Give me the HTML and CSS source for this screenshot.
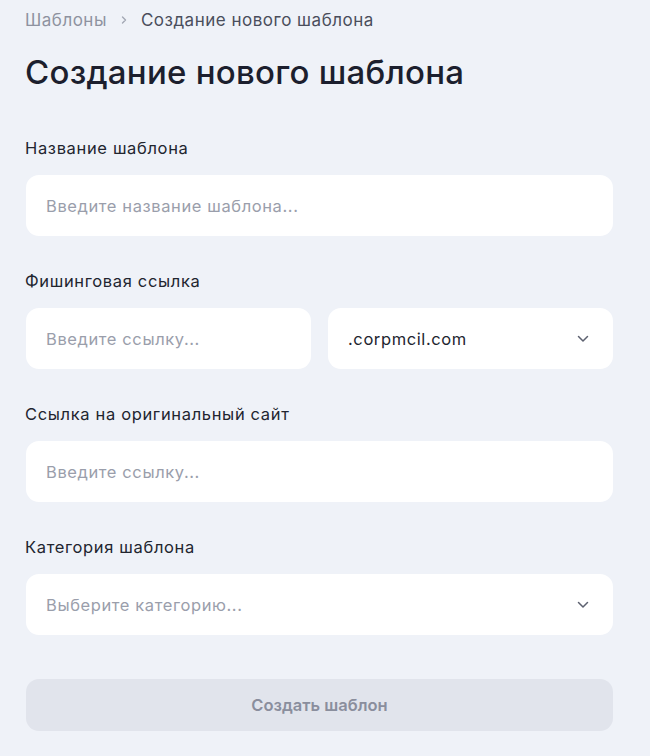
FILE: index.html
```html
<!DOCTYPE html>
<html lang="ru">
<head>
<meta charset="utf-8">
<title>Создание нового шаблона</title>
<link rel="stylesheet" href="styles.css">
</head>
<body>
<div class="page">
  <nav class="crumbs">
    <span class="crumb-link">Шаблоны</span>
    <svg class="crumb-sep" width="8" height="10" viewBox="0 0 8 10"><path d="M2.5 2 L5.5 5 L2.5 8" fill="none" stroke="#a3a7b4" stroke-width="1.4" stroke-linecap="round" stroke-linejoin="round"/></svg>
    <span class="crumb-current">Создание нового шаблона</span>
  </nav>
  <h1 class="title">Создание нового шаблона</h1>

  <form class="form">
    <div class="group">
      <div class="label">Название шаблона</div>
      <div class="field"><span class="placeholder">Введите название шаблона...</span></div>
    </div>
    <div class="group">
      <div class="label">Фишинговая ссылка</div>
      <div class="row">
        <div class="field"><span class="placeholder">Введите ссылку...</span></div>
        <div class="field select"><span class="value">.corpmcil.com</span>
          <svg class="chev" width="12" height="8" viewBox="0 0 12 8"><path d="M1.5 1.5 L6 6 L10.5 1.5" fill="none" stroke="#5d6170" stroke-width="1.5" stroke-linecap="round" stroke-linejoin="round"/></svg>
        </div>
      </div>
    </div>
    <div class="group">
      <div class="label">Ссылка на оригинальный сайт</div>
      <div class="field"><span class="placeholder">Введите ссылку...</span></div>
    </div>
    <div class="group">
      <div class="label">Категория шаблона</div>
      <div class="field select"><span class="placeholder">Выберите категорию...</span>
        <svg class="chev" width="12" height="8" viewBox="0 0 12 8"><path d="M1.5 1.5 L6 6 L10.5 1.5" fill="none" stroke="#5d6170" stroke-width="1.5" stroke-linecap="round" stroke-linejoin="round"/></svg>
      </div>
    </div>
    <div class="button">Создать шаблон</div>
  </form>
</div>
</body>
</html>
```

FILE: styles.css
```css
* { box-sizing: border-box; }
html, body { margin: 0; padding: 0; }
body {
  background: #eff2f8;
  font-family: Inter, "Noto Sans", sans-serif;
  color: #1c1f2e;
}
.page {
  padding: 10px 37px 0 25px;
  width: 650px;
}
.crumbs {
  display: flex;
  align-items: center;
  gap: 13px;
  height: 20px;
  font-size: 17px;
  letter-spacing: 0.5px;
  line-height: 20px;
}
.crumb-link { color: #8e92a0; }
.crumb-current { color: #4a4e5c; }
.crumb-sep { display: block; }
.title {
  margin: 24px 0 0 0;
  font-size: 33px;
  line-height: 36px;
  font-weight: 500;
  color: #1c1f2e;
  letter-spacing: 0.25px;
}
.form {
  margin-top: 48px;
  display: flex;
  flex-direction: column;
  gap: 35px;
}
.group {
  display: flex;
  flex-direction: column;
  gap: 17px;
}
.label {
  font-size: 16.5px;
  letter-spacing: 0.65px;
  line-height: 20px;
  color: #22252f;
}
.row {
  display: grid;
  grid-template-columns: 1fr 1fr;
  gap: 17px;
  padding-left: 1px;
}
.group > .field { margin-left: 1px; }
.field {
  height: 61px;
  background: #ffffff;
  border-radius: 13px;
  display: flex;
  align-items: center;
  justify-content: space-between;
  padding: 0 24px 0 20px;
  font-size: 16.5px;
  letter-spacing: 0.6px;
}
.placeholder { color: #9a9eab; }
.value { color: #22252f; }
.chev { display: block; }
.button {
  margin-top: 9px;
  margin-left: 1px;
  height: 52px;
  border-radius: 13px;
  background: #e1e4ec;
  color: #8a8e9d;
  font-size: 16.5px;
  font-weight: 600;
  display: flex;
  align-items: center;
  justify-content: center;
}
```
